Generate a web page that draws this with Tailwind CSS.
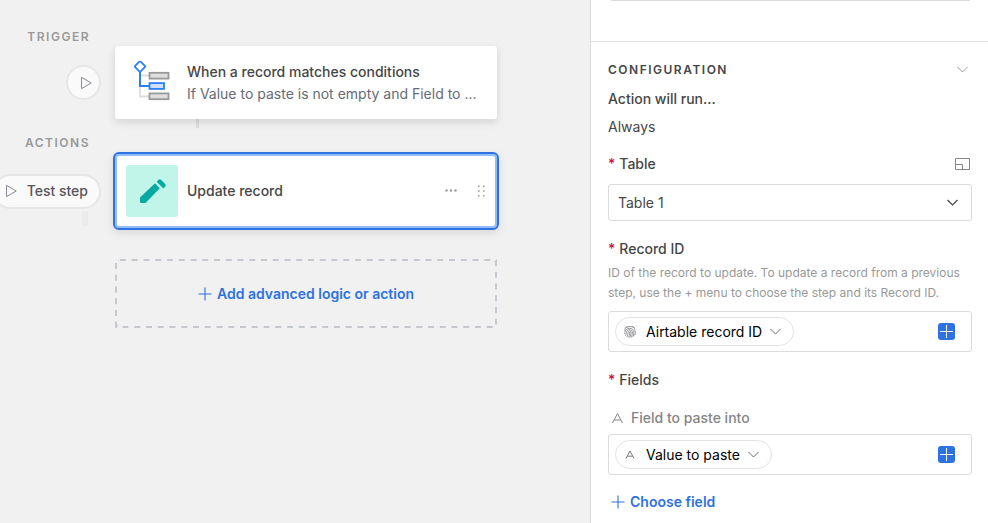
<!DOCTYPE html>
<html lang="en">

<head>
  <meta charset="UTF-8" />
  <meta name="viewport" content="width=device-width, initial-scale=1.0" />
  <title>Automation</title>
  <script src="https://cdn.jsdelivr.net/npm/@tailwindcss/browser@4"></script>
</head>

<body class="flex min-h-screen overflow-hidden bg-[#f1f1f1] font-['Inter',sans-serif] text-sm text-[#464646]">

  <!-- Workflow canvas -->
  <main class="min-w-0 flex-1 pt-7">
    <section>
      <h2 class="w-[90px] text-right text-xs leading-[18px] font-semibold tracking-[1.5px] text-[#999]">TRIGGER</h2>
      <div class="flex items-center">
        <div class="flex w-[101px] shrink-0 justify-end">
          <button type="button" aria-label="Test trigger" class="flex size-[35px] items-center justify-center rounded-full border-2 border-[#e6e6e6] bg-[#fafafa]">
            <svg class="ml-1 size-4" viewBox="0 0 16 16" fill="none" stroke="#8a8a94" stroke-linejoin="round"><path d="M3.5 2.3v11.4L13.2 8z" /></svg>
          </button>
        </div>
        <article class="ml-[14px] flex h-[73px] max-w-[382px] min-w-0 flex-1 items-center rounded-[3px] bg-white pr-4 pl-[18px] shadow-[0_3px_8px_rgba(0,0,0,0.13)]">
          <svg class="h-11 w-[38px] shrink-0" viewBox="0 0 38 44" fill="none">
            <path d="M7 14.5h10M7 22v13.5h10" stroke="#dedede" stroke-width="1.8" />
            <path d="M7 10v15h10" stroke="#2d7ff9" stroke-width="2" />
            <rect x="3.1" y="1.6" width="7.8" height="7.8" rx="1" fill="#fff" stroke="#2d7ff9" stroke-width="1.8" transform="rotate(45 7 5.5)" />
            <rect x="16.5" y="11.8" width="19" height="5.8" fill="#dedede" stroke="#999" stroke-width="1.8" />
            <rect x="16.5" y="22.1" width="14.5" height="5.8" fill="#cfdfff" stroke="#2d7ff9" stroke-width="1.8" />
            <rect x="16.5" y="32.4" width="19" height="5.8" fill="#dedede" stroke="#999" stroke-width="1.8" />
          </svg>
          <div class="ml-4 min-w-0">
            <h3 class="leading-[22px] font-medium whitespace-nowrap">When a record matches conditions</h3>
            <p class="leading-[22px] whitespace-nowrap text-[#666b78]">If Value to paste is not empty and Field to ...</p>
          </div>
        </article>
      </div>
      <div class="ml-[196px] h-[9px] w-[3px] bg-[#dedede]"></div>
    </section>

    <section class="mt-[6px]">
      <h2 class="w-[90px] text-right text-xs leading-[18px] font-semibold tracking-[1.5px] text-[#999]">ACTIONS</h2>
      <div class="flex items-center">
        <div class="relative flex w-[101px] shrink-0 justify-end">
          <button type="button" class="flex h-[35px] shrink-0 items-center rounded-full border-2 border-[#e6e6e6] bg-[#fafafa] pr-[11px] pl-2 font-medium whitespace-nowrap text-[#55555d]">
            <svg class="mr-2 size-4" viewBox="0 0 16 16" fill="none" stroke="#8a8a94" stroke-linejoin="round"><path d="M3.5 2.3v11.4L13.2 8z" /></svg>
            Test step
          </button>
          <div class="absolute top-full right-[13px] mt-0.5 h-[15px] w-[6px] bg-[#ebebeb]"></div>
        </div>
        <article class="ml-3 flex h-[78px] max-w-[386px] min-w-0 flex-1 items-center rounded-md border-2 border-[#2d72e2] bg-white pr-3 pl-[11px] shadow-[0_3px_8px_rgba(0,0,0,0.1)] inset-ring-2 inset-ring-[#94bdf8]">
          <span class="flex size-[52px] shrink-0 items-center justify-center rounded-[3px] bg-[#c2f5e9]">
            <svg class="size-8" viewBox="0 0 32 32" fill="#06a99f">
              <path d="M4 22.5 19 8.3l4.8 4.9L9.5 28H5.6A1.6 1.6 0 0 1 4 26.4z" />
              <path d="m20.7 6.7 1.9-1.9a1.7 1.7 0 0 1 2.4 0l4.2 4.3a1.7 1.7 0 0 1 0 2.4l-1.8 1.9z" />
            </svg>
          </span>
          <h3 class="ml-[9px] flex-1 truncate font-medium">Update record</h3>
          <button type="button" aria-label="More options" class="mr-[18px]">
            <svg class="size-4" viewBox="0 0 16 16" fill="#999"><circle cx="3.5" cy="7.5" r="1.2" /><circle cx="8" cy="7.5" r="1.2" /><circle cx="12.5" cy="7.5" r="1.2" /></svg>
          </button>
          <button type="button" aria-label="Reorder" class="cursor-grab">
            <svg class="h-4 w-2" viewBox="0 0 8 16" fill="#a6a6a6">
              <rect x="1" y="2.4" width="1.6" height="1.6" /><rect x="6" y="2.4" width="1.6" height="1.6" />
              <rect x="1" y="7.2" width="1.6" height="1.6" /><rect x="6" y="7.2" width="1.6" height="1.6" />
              <rect x="1" y="12" width="1.6" height="1.6" /><rect x="6" y="12" width="1.6" height="1.6" />
            </svg>
          </button>
        </article>
      </div>
    </section>

    <div class="mt-[29px] flex pl-[115px]">
      <button type="button" class="relative flex h-[69px] max-w-[382px] min-w-0 flex-1 items-center justify-center font-semibold text-[#2d72e2]">
        <svg class="absolute inset-0 size-full" fill="none" stroke="#c6c8cf" stroke-width="4" stroke-dashoffset="-1">
          <rect width="100%" height="100%" rx="4" stroke-dasharray="6 5.75" />
        </svg>
        <svg class="mr-[5px] size-[14px]" viewBox="0 0 14 14" stroke="#2d72e2" stroke-width="1.1"><path d="M7 .5v13M.5 7h13" /></svg>
        Add advanced logic or action
      </button>
    </div>
  </main>

  <!-- Properties panel -->
  <aside class="w-[398px] shrink-0 border-l border-[#dcdcdc] bg-white">
    <div class="h-[41px] pr-[18px] pl-5">
      <div class="h-px bg-[#dcdcdc]"></div>
    </div>

    <div class="border-t border-[#e0e0e0] pt-[18px] pr-4 pl-[17px]">
      <div class="flex h-5 items-center justify-between">
        <h2 class="text-xs font-semibold tracking-[1.5px]">CONFIGURATION</h2>
        <button type="button" aria-label="Collapse" class="pr-1">
          <svg class="h-2 w-[11px]" viewBox="0 0 11 8" fill="none" stroke="#999"><path d="m.5 1 5 5 5-5" /></svg>
        </button>
      </div>
      <p class="mt-[9px] leading-5 font-medium">Action will run...</p>
      <p class="mt-2 leading-5">Always</p>

      <div class="mt-[17px] flex h-5 items-center justify-between">
        <label for="table" class="font-medium"><span class="mr-1 text-[#d0103f]">*</span>Table</label>
        <button type="button" aria-label="Open table" class="pr-0.5">
          <svg class="h-3 w-[15px]" viewBox="0 0 15 12" fill="none" stroke="#858585"><path d="M.5.5h14v11H.5zM.5 6.5h7v5" /></svg>
        </button>
      </div>
      <div class="relative mt-[10px]">
        <select id="table" class="h-[37px] w-full appearance-none rounded-[3px] border border-[#dcdcdc] bg-white px-[9px]">
          <option>Table 1</option>
        </select>
        <svg class="pointer-events-none absolute top-[15px] right-[14px] h-2 w-[11px]" viewBox="0 0 11 8" fill="none" stroke="#464646" stroke-width="1.2"><path d="m.5 1 5 5 5-5" /></svg>
      </div>

      <h3 class="mt-[18px] leading-5 font-medium"><span class="mr-1 text-[#d0103f]">*</span>Record ID</h3>
      <p class="mt-1 text-xs leading-5 text-[#999]">ID of the record to update. To update a record from a previous step, use the + menu to choose the step and its Record ID.</p>
      <div class="mt-2 flex h-[41px] items-center justify-between rounded-[3px] border border-[#dcdcdc] pr-4 pl-1.5">
        <button type="button" class="flex h-[29px] items-center rounded-full border border-[#e2e2e2] pr-3 pl-2 text-black">
          <svg class="mr-[10px] size-3" viewBox="0 0 12 12" fill="none" stroke="#6e6e76" stroke-width=".7" stroke-linecap="round">
            <path d="M2.2 1.8a5.5 5.5 0 0 1 7.6 0M.7 4.3A5 5 0 0 1 11 4.5c.5 1.6.4 3.3-.1 4.7M.7 7.5C1 3.7 3 2.3 6 2.3S10 5 9.8 7.5c0 1-.3 2-.6 3M1.6 9.5c.9-1.5.6-2.7 1-4C3.3 3.3 8 2.8 8.4 6.2c.1 1.8-.3 3.5-.9 5M3 10.7c1-1.9.9-3.3 1.1-4.5.5-1.9 2.9-1.5 2.9.3 0 1.7-.5 3.3-1.2 4.9M4.6 11c.8-1.5 1-3 1-4.6" />
          </svg>
          Airtable record ID
          <svg class="ml-2 h-2 w-[11px]" viewBox="0 0 11 8" fill="none" stroke="#6e6e76"><path d="m.5 1 5 5 5-5" /></svg>
        </button>
        <button type="button" aria-label="Insert value" class="flex size-[17px] items-center justify-center rounded-[3px] bg-[#2d72e2]">
          <svg class="size-[13px]" viewBox="0 0 13 13" stroke="#fff"><path d="M6.5 0v13M0 6.5h13" /></svg>
        </button>
      </div>

      <h3 class="mt-[18px] leading-5 font-medium"><span class="mr-1 text-[#d0103f]">*</span>Fields</h3>
      <h4 class="mt-[18px] flex items-center pl-1 leading-5 font-medium text-[#858585]">
        <svg class="mr-2 size-[11px]" viewBox="0 0 11 11" fill="none" stroke="#858585" stroke-linejoin="round"><path d="M.5 10 5.5.5l5 9.5M2.2 7h6.6" /></svg>
        Field to paste into
      </h4>
      <div class="mt-1.5 flex h-[41px] items-center justify-between rounded-[3px] border border-[#dcdcdc] pr-4 pl-1.5">
        <button type="button" class="flex h-[29px] items-center rounded-full border border-[#e2e2e2] pr-3 pl-2 text-black">
          <svg class="mr-[10px] size-3" viewBox="0 0 12 12" fill="none" stroke="#77777f" stroke-linejoin="round"><path d="M2 9.5 6 2l4 7.5M3.4 7.2h5.2" /></svg>
          Value to paste
          <svg class="ml-2 h-2 w-[11px]" viewBox="0 0 11 8" fill="none" stroke="#6e6e76"><path d="m.5 1 5 5 5-5" /></svg>
        </button>
        <button type="button" aria-label="Insert value" class="flex size-[17px] items-center justify-center rounded-[3px] bg-[#2d72e2]">
          <svg class="size-[13px]" viewBox="0 0 13 13" stroke="#fff"><path d="M6.5 0v13M0 6.5h13" /></svg>
        </button>
      </div>

      <button type="button" class="mt-[17px] flex items-center pl-[3px] leading-5 font-semibold text-[#2d72e2]">
        <svg class="mr-[5px] size-[14px]" viewBox="0 0 14 14" stroke="#2d72e2" stroke-width="1.1"><path d="M7 .5v13M.5 7h13" /></svg>
        Choose field
      </button>
    </div>
  </aside>
</body>

</html>
